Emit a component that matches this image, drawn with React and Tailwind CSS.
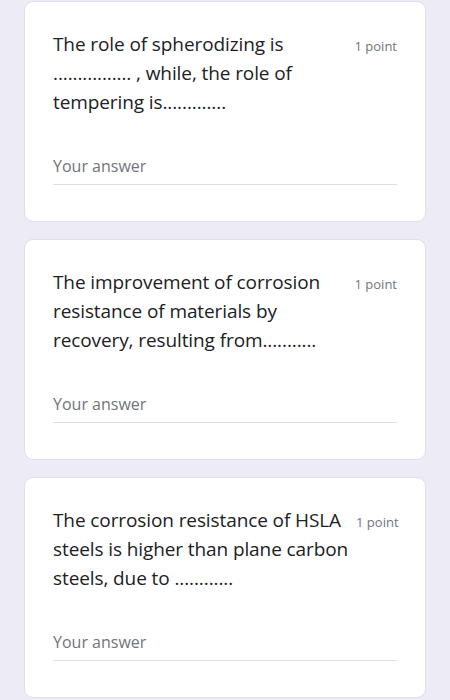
export default function App() {
  const qs = [
    ["The role of spherodizing is", "................ , while, the role of", "tempering is............."],
    ["The improvement of corrosion", "resistance of materials by", "recovery, resulting from..........."],
    ["The corrosion resistance of HSLA", "steels is higher than plane carbon", "steels, due to ............"],
  ];
  return (
    <div className="min-h-[700px] w-[450px] overflow-hidden bg-[#edebf6] pt-px" style={{ fontFamily: '"Open Sans", Roboto, sans-serif' }}>
      <div className="flex flex-col gap-[17px] px-[24px]">
        {qs.map((lines, i) => (
          <div key={i} className="h-[221px] rounded-[9px] border border-[#e0dfe8] bg-white px-[28px] pt-[28px]">
            <div className="flex items-start justify-between gap-2">
              <div className="text-[19px] leading-[29px] text-[#202124] tracking-[-0.1px]">
                {lines.map((l, j) => (
                  <div key={j} className="whitespace-nowrap">{l}</div>
                ))}
              </div>
              <div className="mt-[7px] whitespace-nowrap text-[13px] leading-[18px] text-[#70757a]">1 point</div>
            </div>
            <div className="mt-[38px] border-b border-[#e0e0e0] pb-[7px] text-[16px] leading-[22px] text-[#70757a]">
              Your answer
            </div>
          </div>
        ))}
      </div>
    </div>
  );
}
